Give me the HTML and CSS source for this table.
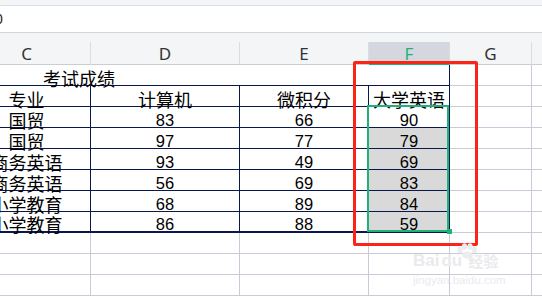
FILE: index.html
```html
<!DOCTYPE html>
<html lang="zh-CN">
<head>
<meta charset="utf-8">
<link rel="stylesheet" href="styles.css">
</head>
<body>
<div class="topbar"></div>
<div class="formula"><span class="fx">0</span></div>
<div class="colhead">
  <div class="hc">C</div>
  <div class="hc">D</div>
  <div class="hc">E</div>
  <div class="hc active">F</div>
  <div class="hc">G</div>
  <div class="hc"></div>
</div>
<div class="grid">
  <div class="c title span4"><span class="tt">考试成绩</span></div>
  <div class="c g"></div><div class="c g"></div>

  <div class="c t cj">专业</div><div class="c t cj">计算机</div><div class="c t cj">微积分</div><div class="c t cj">大学英语</div>
  <div class="c g"></div><div class="c g"></div>

  <div class="c t cj">国贸</div><div class="c t n">83</div><div class="c t n">66</div><div class="c t n">90</div>
  <div class="c g"></div><div class="c g"></div>

  <div class="c t cj">国贸</div><div class="c t n">97</div><div class="c t n">77</div><div class="c t n sel">79</div>
  <div class="c g"></div><div class="c g"></div>

  <div class="c t cj">商务英语</div><div class="c t n">93</div><div class="c t n">49</div><div class="c t n sel">69</div>
  <div class="c g"></div><div class="c g"></div>

  <div class="c t cj">商务英语</div><div class="c t n">56</div><div class="c t n">69</div><div class="c t n sel">83</div>
  <div class="c g"></div><div class="c g"></div>

  <div class="c t cj">小学教育</div><div class="c t n">68</div><div class="c t n">89</div><div class="c t n sel">84</div>
  <div class="c g"></div><div class="c g"></div>

  <div class="c t last cj">小学教育</div><div class="c t last n">86</div><div class="c t last n">88</div><div class="c t last n sel">59</div>
  <div class="c g"></div><div class="c g"></div>

  <div class="c g"></div><div class="c g"></div><div class="c g"></div><div class="c g"></div><div class="c g"></div><div class="c g"></div>
  <div class="c g"></div><div class="c g"></div><div class="c g"></div><div class="c g"></div><div class="c g"></div><div class="c g"></div>
  <div class="c g"></div><div class="c g"></div><div class="c g"></div><div class="c g"></div><div class="c g"></div><div class="c g"></div>
</div>

<div class="selbox"></div>
<div class="handle"></div>
<div class="redbox"></div>

<div class="watermark">
  <div class="wm-top"><span>Bai</span><span class="du">du</span><span class="jy">经验</span></div>
  <div class="wm-url">jingyan.baidu.com</div>
  <svg class="paw" width="22" height="16" viewBox="0 0 22 16">
    <ellipse cx="4" cy="7" rx="2.6" ry="3.2" fill="#ececef"/>
    <ellipse cx="8.5" cy="3.5" rx="2.6" ry="3.2" fill="#ececef"/>
    <ellipse cx="14" cy="3.5" rx="2.6" ry="3.2" fill="#ececef"/>
    <ellipse cx="18.5" cy="7" rx="2.6" ry="3.2" fill="#ececef"/>
    <ellipse cx="11" cy="12" rx="5" ry="3.6" fill="#ececef"/>
  </svg>
</div>
</body>
</html>
```
FILE: styles.css
```css
html, body {
  margin: 0;
  padding: 0;
}
body {
  width: 542px;
  height: 300px;
  overflow: hidden;
  position: relative;
  background: #ffffff;
  font-family: "Liberation Sans", "Noto Sans CJK SC", sans-serif;
  color: #000;
}
.topbar {
  height: 5px;
  background: #f3f4f6;
  border-bottom: 1px solid #dcdfe4;
}
.formula {
  height: 26px;
  background: #fff;
  border-bottom: 1px solid #d2d5db;
  font-size: 14px;
  line-height: 26px;
  overflow: hidden;
}
.fx {
  display: inline-block;
  margin-left: -5px;
  color: #222;
}
.colhead {
  display: grid;
  grid-template-columns: 128px 149px 129px 81px 82px 30px;
  margin-left: -37px;
  padding-top: 9px;
  background: #f4f5f7;
}
.hc {
  box-sizing: border-box;
  height: 23px;
  border-right: 1px solid #d9dce1;
  border-bottom: 1px solid #c9cdd6;
  font-family: "Noto Sans", "Liberation Sans", sans-serif;
  font-size: 17px;
  line-height: 16px;
  color: #333;
  display: flex;
  align-items: flex-end;
  justify-content: center;
  padding-bottom: 2px;
}
.hc.active {
  background: #d4d7de;
  color: #22b07a;
  border-bottom: 2px solid #22b07a;
  padding-bottom: 1px;
}
.grid {
  display: grid;
  grid-template-columns: 128px 149px 129px 81px 82px 30px;
  grid-auto-rows: 21px;
  margin-left: -37px;
}
.c {
  box-sizing: border-box;
  border-right: 1px solid #c8ccd8;
  border-bottom: 1px solid #c8ccd8;
  display: flex;
  align-items: flex-end;
  justify-content: center;
  line-height: 14px;
  overflow: visible;
  white-space: nowrap;
}
.span4 {
  grid-column: span 4;
}
.title {
  border-right-color: #0a1850;
  border-bottom-color: #0a1850;
  justify-content: flex-start;
  font-size: 18px;
  font-family: "Noto Sans CJK SC", sans-serif;
}
.tt {
  padding-left: 80px;
}
.t {
  border-right-color: #0a1850;
  border-bottom-color: #0a1850;
}
.cj {
  font-family: "Noto Sans CJK SC", sans-serif;
  font-size: 18px;
}
.n {
  font-size: 16.5px;
}
.sel {
  background: #d9d9d9;
}
.last {
  border-bottom-width: 2px;
}
.selbox {
  position: absolute;
  left: 367px;
  top: 105px;
  width: 78px;
  height: 123px;
  border: 2px solid #22b07a;
}
.handle {
  position: absolute;
  left: 447px;
  top: 229px;
  width: 5px;
  height: 5px;
  background: #22b07a;
}
.redbox {
  position: absolute;
  left: 353px;
  top: 61px;
  width: 119px;
  height: 179px;
  border: 3px solid #fb2417;
  border-radius: 2px;
}
.watermark {
  position: absolute;
  left: 413px;
  top: 243px;
  width: 100px;
  height: 45px;
  color: #eaeaed;
  font-family: "Liberation Sans", "Noto Sans CJK SC", sans-serif;
}
.wm-top {
  position: absolute;
  left: 0;
  top: 9px;
  font-size: 17px;
  font-weight: bold;
  line-height: 18px;
  display: flex;
  align-items: flex-end;
}
.du {
  margin-left: 2px;
}
.jy {
  margin-left: 6px;
  font-size: 15px;
  font-family: "Noto Sans CJK SC", sans-serif;
}
.wm-url {
  position: absolute;
  left: 0;
  top: 31px;
  font-size: 11.5px;
  line-height: 13px;
}
.paw {
  position: absolute;
  left: 43px;
  top: 0;
}
```
